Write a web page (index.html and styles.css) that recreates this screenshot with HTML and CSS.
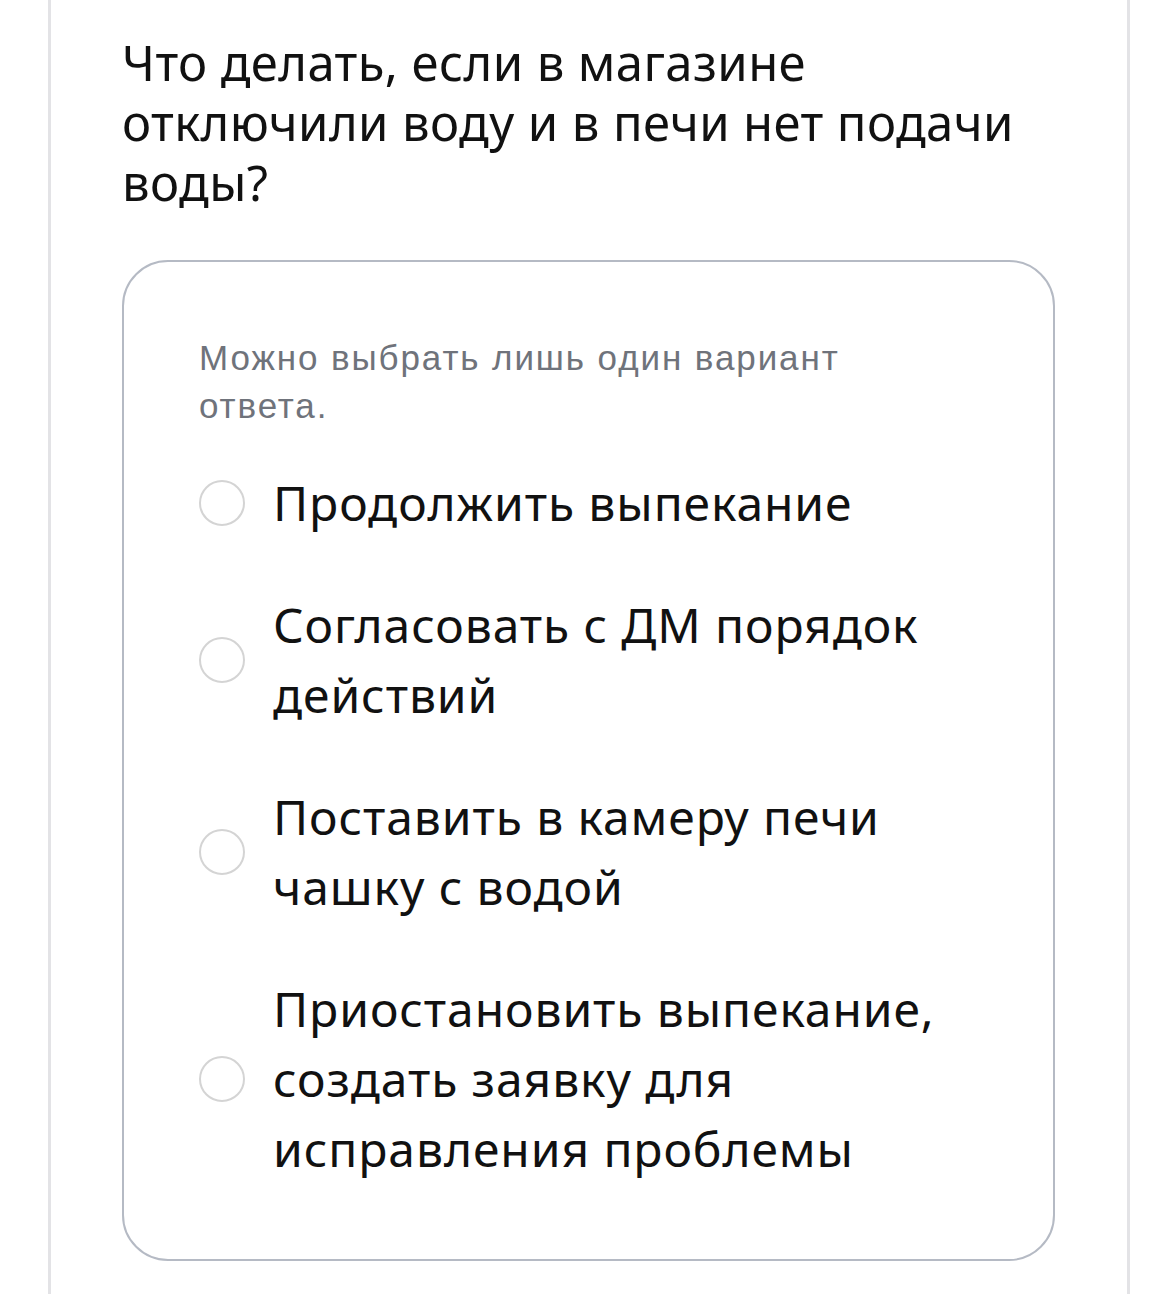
FILE: index.html
```html
<!DOCTYPE html>
<html lang="ru">
<head>
    <meta charset="UTF-8">
    <meta name="viewport" content="width=device-width, initial-scale=1.0">
    <title>Тест</title>
    <link rel="stylesheet" href="styles.css">
</head>
<body>
    <div class="page">
        <h1 class="question">Что делать, если в магазине отключили воду и в печи нет подачи воды?</h1>

        <form class="answer-card">
            <p class="hint">Можно выбрать лишь один вариант ответа.</p>

            <label class="option">
                <input type="radio" name="answer" value="1">
                <span class="option-text">Продолжить выпекание</span>
            </label>
            <label class="option">
                <input type="radio" name="answer" value="2">
                <span class="option-text">Согласовать с ДМ порядок действий</span>
            </label>
            <label class="option">
                <input type="radio" name="answer" value="3">
                <span class="option-text">Поставить в камеру печи чашку с водой</span>
            </label>
            <label class="option">
                <input type="radio" name="answer" value="4">
                <span class="option-text">Приостановить выпекание, создать заявку для исправления проблемы</span>
            </label>
        </form>
    </div>
</body>
</html>
```

FILE: styles.css
```css
body {
    margin: 0;
    background-color: #fff;
    color: #111;
    font-family: "Noto Sans", "Open Sans", sans-serif;
}
.page {
    margin: 0 41px 0 48px;
    min-height: 100vh;
    box-sizing: border-box;
    padding: 32px 72px 0 71px;
    border-left: 3px solid #e3e3e6;
    border-right: 3px solid #e3e3e6;
}
.question {
    max-width: 910px;
    margin: 0 0 48px;
    font-size: 49px;
    line-height: 60px;
    font-weight: 400;
    letter-spacing: 0.4px;
}
.answer-card {
    border: 2px solid #b5bac4;
    border-radius: 46px;
    padding: 72px 75px 75px 75px;
    display: flex;
    flex-direction: column;
    gap: 52px;
}
.hint {
    max-width: 700px;
    margin: 0 0 -14px;
    font-family: "Liberation Sans", Arial, sans-serif;
    font-size: 35px;
    line-height: 48px;
    letter-spacing: 1.9px;
    color: #6f737b;
}
.option {
    display: flex;
    align-items: center;
    gap: 28px;
    cursor: pointer;
}
.option input[type="radio"] {
    appearance: none;
    flex: none;
    width: 46px;
    height: 46px;
    margin: 0;
    border: 2px solid #d4d4d4;
    border-radius: 50%;
    background-color: #fff;
}
.option input[type="radio"]:checked {
    border: 14px solid #FFC107;
}
.option-text {
    font-size: 48px;
    line-height: 70px;
    letter-spacing: 0.9px;
}
```
